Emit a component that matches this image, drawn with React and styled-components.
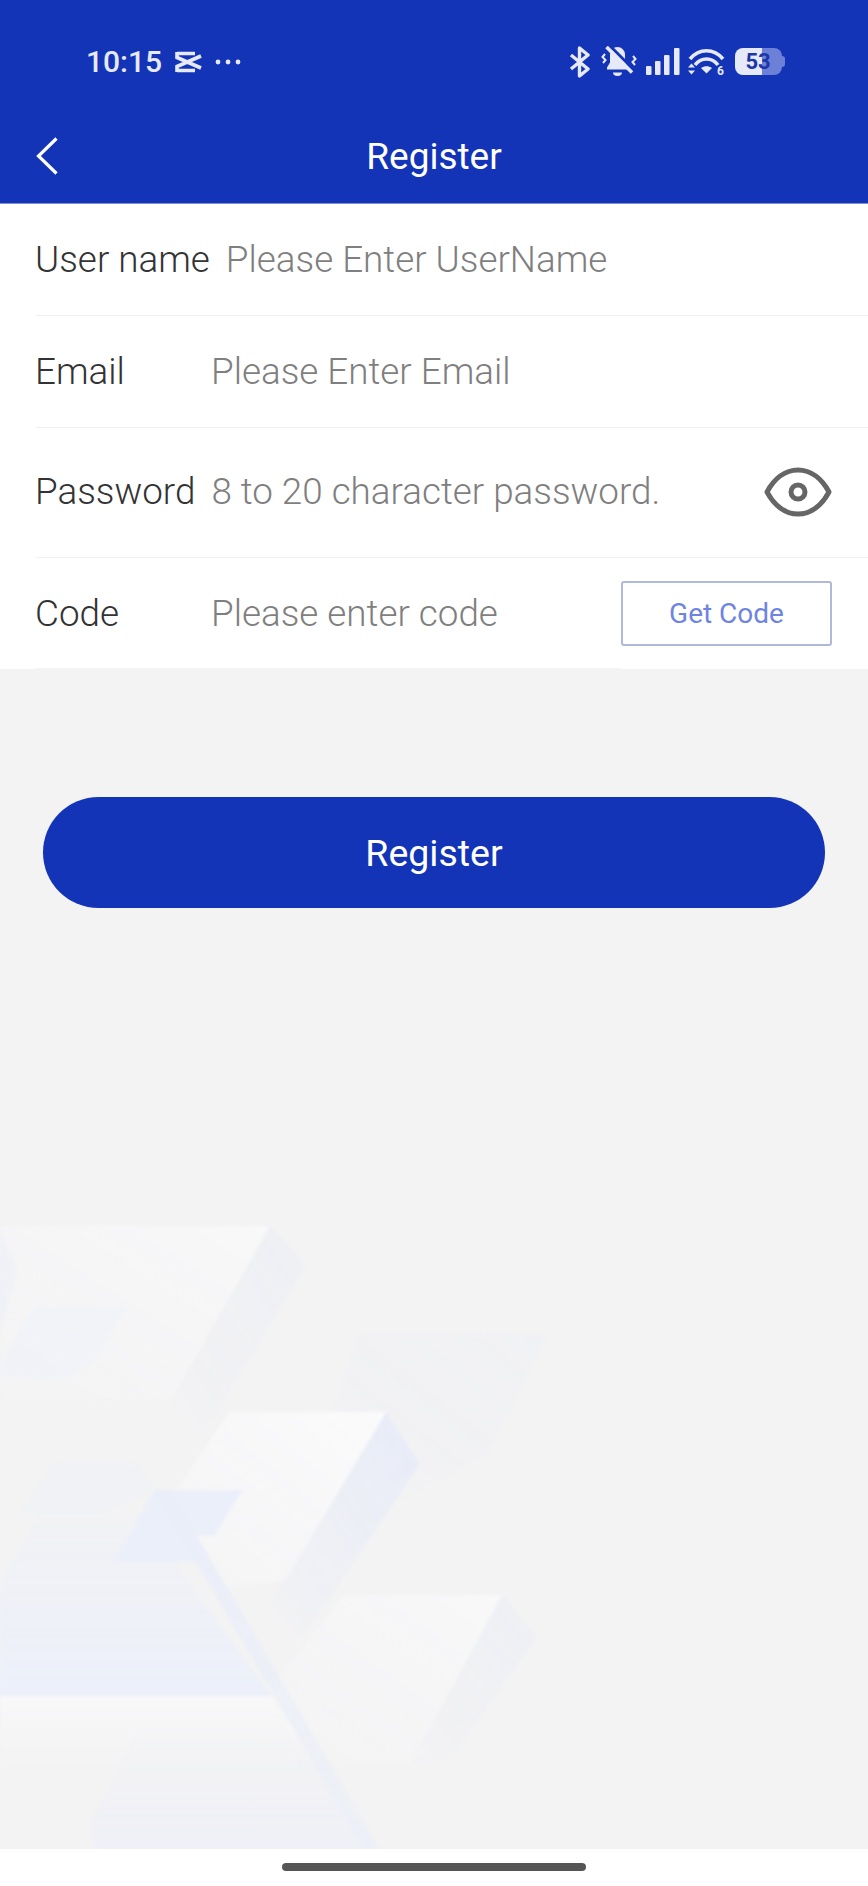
import React from "react";
import styled, { createGlobalStyle } from "styled-components";

const GlobalStyle = createGlobalStyle`
  html, body {
    margin: 0;
    padding: 0;
    background: #f3f3f4;
    font-family: Roboto, "Liberation Sans", sans-serif;
  }
  * {
    box-sizing: border-box;
  }
`;

const Page = styled.div`
  width: 868px;
  height: 1886px;
  display: flex;
  flex-direction: column;
  overflow: hidden;
`;

const Header = styled.header`
  flex: none;
  background-color: #1434b8;
  border-bottom: 1px solid #7f8fd0;
`;

const StatusBar = styled.div`
  height: 110px;
  padding: 13px 86px 0 86px;
  display: flex;
  align-items: center;
  justify-content: space-between;
  color: #e6e9f7;
`;

const StatusGroup = styled.div`
  display: flex;
  align-items: center;
`;

const Clock = styled.span`
  font-size: 30px;
  font-weight: 500;
  margin-right: 13px;
`;

const StatusIcon = styled.svg`
  display: block;
  flex: none;
  margin-left: ${(props) => props.$gap || 0}px;
`;

const Battery = styled.div`
  position: relative;
  width: 47px;
  height: 27px;
  margin-left: 8px;
  border-radius: 8px;
  background: linear-gradient(to right, #e6e9f7 0 57%, #6c80d8 57% 100%);
  color: #1c37a8;
  font-size: 22px;
  font-weight: 700;
  line-height: 27px;
  text-align: center;
  padding-right: 1px;

  &::after {
    content: "";
    position: absolute;
    left: 47px;
    top: 8px;
    width: 3px;
    height: 11px;
    border-radius: 0 3px 3px 0;
    background: #6c80d8;
  }
`;

const Nav = styled.nav`
  height: 93px;
  padding: 0 36px 1px;
  display: grid;
  grid-template-columns: 1fr auto 1fr;
  align-items: center;
`;

const Title = styled.h1`
  margin: 0;
  color: #fff;
  font-size: 37px;
  font-weight: 400;
`;

const Form = styled.section`
  flex: none;
  background: #fff;
  padding-left: 35px;
`;

const Row = styled.div`
  height: ${(props) => props.$height}px;
  padding-bottom: ${(props) => props.$lift || 0}px;
  display: flex;
  align-items: center;
  border-bottom: 1px solid ${(props) => (props.$last ? "#f4f4f5" : "#f1f1f2")};
  margin-right: ${(props) => (props.$last ? "247px" : "0")};
  font-size: 36.8px;
  font-weight: 300;
  white-space: nowrap;
`;

const Label = styled.span`
  min-width: 160px;
  margin-right: 16px;
  color: #333;
`;

const Placeholder = styled.span`
  flex: 1;
  color: #7f7f7f;
`;

const EyeIcon = styled.svg`
  margin-right: 36px;
`;

const CodeButton = styled.button`
  width: 211px;
  height: 65px;
  margin-right: -211px;
  flex: none;
  background: #fff;
  border: 2px solid #b0b9dc;
  border-radius: 3px;
  color: #6f84e0;
  font-family: inherit;
  font-size: 28px;
  font-weight: 400;
  padding: 0;
`;

const Body = styled.main`
  flex: 1;
  min-height: 0;
  display: flex;
  flex-direction: column;
`;

const SubmitButton = styled.button`
  flex: none;
  width: 782px;
  height: 111px;
  margin: 128px 0 0 43px;
  border: 0;
  border-radius: 56px;
  background: #1434b8;
  color: #fff;
  font-family: inherit;
  font-size: 37.5px;
  font-weight: 400;
`;

const Backdrop = styled.svg`
  display: block;
  flex: none;
  margin-top: auto;
`;

const HomeArea = styled.footer`
  flex: none;
  height: 37px;
  background: #fff;
  display: flex;
  justify-content: center;
  padding-top: 14px;
`;

const HomeBar = styled.div`
  width: 304px;
  height: 8px;
  border-radius: 4px;
  background: #555;
`;

const CutIcon = () => (
  <StatusIcon width="28" height="22" viewBox="0 0 28 22" fill="none" stroke="#e6e9f7" strokeWidth="3.6">
    <path d="M2 2.500H20M2 19.500H20" />
    <path d="M2 1V6.500L26 17M2 21V15.500L26 5" />
  </StatusIcon>
);

const DotsIcon = () => (
  <StatusIcon $gap={12} width="26" height="6" viewBox="0 0 26 6" fill="#e6e9f7">
    <circle cx="3" cy="3" r="2.400" />
    <circle cx="13" cy="3" r="2.400" />
    <circle cx="23" cy="3" r="2.400" />
  </StatusIcon>
);

const BluetoothIcon = () => (
  <StatusIcon width="22" height="32" viewBox="0 0 22 32" fill="none" stroke="#e6e9f7" strokeWidth="3.400">
    <path d="M2 9L19 23L10.500 30V2L19 9L2 23" strokeLinejoin="round" />
  </StatusIcon>
);

const MutedBellIcon = () => (
  <StatusIcon $gap={10} width="36" height="32" viewBox="0 0 36 32" fill="none">
    <path
      d="M16.500 1a7.500 7.500 0 0 1 7.500 7.500v8l3 5v2H6v-2l3-5v-8A7.500 7.500 0 0 1 16.500 1Z"
      fill="#e6e9f7"
    />
    <path d="M12 26.500h9a4.500 3.500 0 0 1-9 0Z" fill="#e6e9f7" />
    <path d="M9 0L34 25" stroke="#1434b8" strokeWidth="3" />
    <path d="M5.500 1L31 26.500" stroke="#e6e9f7" strokeWidth="3.600" />
    <path d="M4 8L1.500 11L4.500 14L2 17M32 10L34.500 13L31.500 16L34 19" stroke="#e6e9f7" strokeWidth="2" />
  </StatusIcon>
);

const SignalIcon = () => (
  <StatusIcon $gap={9} width="34" height="27" viewBox="0 0 34 27" fill="#e6e9f7">
    <rect x="0" y="18" width="5.500" height="9" rx="1" />
    <rect x="9" y="13" width="5.500" height="14" rx="1" />
    <rect x="18" y="7" width="5.500" height="20" rx="1" />
    <rect x="28" y="0" width="5.500" height="27" rx="1" />
  </StatusIcon>
);

const WifiIcon = () => (
  <StatusIcon $gap={8} width="39" height="32" viewBox="0 -2 39 32" fill="none">
    <path d="M2 11C11 0 26 0 35 11" stroke="#e6e9f7" strokeWidth="3.600" />
    <path d="M7 17C13 9 24 9 30 17" stroke="#e6e9f7" strokeWidth="3.600" />
    <path d="M13 20c3.500-2.500 7.500-2.500 11 0l-5.500 5.500Z" fill="#e6e9f7" />
    <path d="M0 19.500l3.500-4 3.500 4ZM0 22.500h7l-3.500 4Z" fill="#e6e9f7" />
    <text x="29" y="27" fill="#e6e9f7" fontSize="12" fontWeight="700" fontFamily="Roboto, sans-serif">
      6
    </text>
  </StatusIcon>
);

const BackIcon = () => (
  <svg width="22" height="38" viewBox="0 0 22 38" fill="none" stroke="#fff" strokeWidth="3.200">
    <path d="M20.500 1.500L2.500 19L20.500 36.500" />
  </svg>
);

const Eye = () => (
  <EyeIcon width="68" height="50" viewBox="0 0 68 50" fill="none" stroke="#666">
    <path d="M3 25C10 12 21 3 34 3S58 12 65 25C58 38 47 47 34 47S10 38 3 25Z" strokeWidth="5" strokeLinejoin="round" />
    <circle cx="34" cy="25" r="7" strokeWidth="5" />
  </EyeIcon>
);

// gradient running from the upper right corner of a shape, gone by its lower left
const Fade = ({ id, color, from = 1, to = 0, vertical }) => (
  <linearGradient id={id} x1={vertical ? 0 : 1} y1="0" x2="0" y2="1">
    <stop offset="0" stopColor={color} stopOpacity={from} />
    <stop offset="1" stopColor={color} stopOpacity={to} />
  </linearGradient>
);

// faint shapes behind the lower half of the page
const BackdropArt = () => (
  <Backdrop width="868" height="649" viewBox="0 1200 868 649">
    <defs>
      <filter id="soft">
        <feGaussianBlur stdDeviation="1.5" />
      </filter>
      <Fade id="paleWhite" color="#f9f9fa" from={0.8} to={0.1} />
      <Fade id="whiteBlock" color="#fbfbfc" from={0.95} to={0.15} />
      <Fade id="blueBand" color="#e7ebf8" from={0.95} to={0} />
      <Fade id="greyBand" color="#eceef4" from={0.75} to={0} />
      <Fade id="faintBand" color="#eff0f5" from={0.55} to={0} />
      <Fade id="blueWash" color="#ebeffb" from={0.1} to={0.9} vertical />
      <Fade id="whiteDrop" color="#f9f9fa" from={0.8} to={0} vertical />
      <Fade id="paleFloor" color="#eff0f7" from={0.05} to={0.9} vertical />
      <Fade id="stripe" color="#e9edf9" from={0.9} to={0.4} vertical />
    </defs>
    <g filter="url(#soft)">
      <path d="M357 1335H546L489 1453L400 1500L330 1420Z" fill="url(#faintBand)" />
      <path d="M270 1226L305 1265L200 1440L171 1400Z" fill="url(#greyBand)" />
      <path d="M0 1226H270L171 1400H0Z" fill="url(#paleWhite)" />
      <path d="M0 1230L18 1270L0 1330Z" fill="#eef0f8" opacity="0.7" />
      <path d="M34 1307H127L95 1360L70 1377H0V1365Z" fill="#eef1f8" opacity="0.6" />
      <path d="M386 1412L420 1464L300 1640L270 1600Z" fill="url(#blueBand)" />
      <path d="M502 1595L536 1637L450 1760L404 1767Z" fill="url(#greyBand)" />
      <path d="M229 1412H386L286 1580L215 1590L170 1500Z" fill="url(#whiteBlock)" />
      <path d="M54 1462H136L154 1490L100 1514H20Z" fill="#eff1f8" opacity="0.5" />
      <path d="M343 1595H502L411 1763L300 1760L270 1690Z" fill="url(#paleWhite)" />
      <path d="M0 1586L39 1514H140L271 1696H0Z" fill="url(#blueWash)" />
      <path d="M0 1696H271L296 1733L300 1770H0Z" fill="url(#whiteDrop)" />
      <path d="M136 1733H296L378 1849H96L89 1829Z" fill="url(#paleFloor)" />
      <path d="M154 1490H243L214 1536H189L204 1562H114Z" fill="#ebeff9" />
      <path d="M154 1490L170 1490L380 1849H364Z" fill="url(#stripe)" />
    </g>
  </Backdrop>
);

const App = () => {
  return (
    <Page>
      <GlobalStyle />
      <Header>
        <StatusBar>
          <StatusGroup>
            <Clock>10:15</Clock>
            <CutIcon />
            <DotsIcon />
          </StatusGroup>
          <StatusGroup>
            <BluetoothIcon />
            <MutedBellIcon />
            <SignalIcon />
            <WifiIcon />
            <Battery>53</Battery>
          </StatusGroup>
        </StatusBar>
        <Nav>
          <BackIcon />
          <Title>Register</Title>
        </Nav>
      </Header>
      <Form>
        <Row $height={112}>
          <Label>User name</Label>
          <Placeholder>Please Enter UserName</Placeholder>
        </Row>
        <Row $height={112}>
          <Label>Email</Label>
          <Placeholder>Please Enter Email</Placeholder>
        </Row>
        <Row $height={130} $lift={2}>
          <Label>Password</Label>
          <Placeholder>8 to 20 character password.</Placeholder>
          <Eye />
        </Row>
        <Row $height={111} $last>
          <Label>Code</Label>
          <Placeholder>Please enter code</Placeholder>
          <CodeButton>Get Code</CodeButton>
        </Row>
      </Form>
      <Body>
        <SubmitButton>Register</SubmitButton>
        <BackdropArt />
      </Body>
      <HomeArea>
        <HomeBar />
      </HomeArea>
    </Page>
  );
};

export default App;
